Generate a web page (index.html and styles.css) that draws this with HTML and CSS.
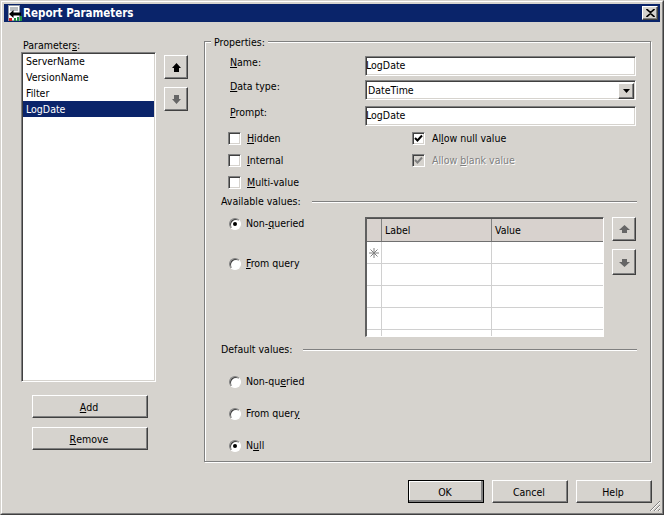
FILE: index.html
```html
<!DOCTYPE html>
<html lang="en">
<head>
<meta charset="utf-8">
<title>Report Parameters</title>
<link rel="stylesheet" href="styles.css">
</head>
<body>
<div class="window">
  <div class="frame">
    <header class="titlebar">
      <svg class="app-icon" width="14" height="17" viewBox="0 0 14 17">
        <rect x="0.5" y="0.5" width="11" height="15" fill="#fff" stroke="#9098a8"/>
        <path d="M2 3h8M2 5h8" stroke="#707880"/>
        <rect x="1" y="13" width="3" height="3" fill="#d02020"/>
        <rect x="6" y="13" width="2" height="3" fill="#209040"/>
        <rect x="9" y="12" width="2" height="4" fill="#209040"/>
        <rect x="12" y="11" width="2" height="5" fill="#209040"/>
        <path d="M1 9 5.500 5v2.500H13v3H5.500V13z" fill="#000"/>
      </svg>
      <span class="title">Report Parameters</span>
      <button class="close" type="button" aria-label="Close">
        <svg width="9" height="8" viewBox="0 0 9 8"><path d="M0.5 0 4.500 3.500 8.500 0M0.500 8 4.500 4.500 8.500 8" fill="none" stroke="#000" stroke-width="1.6"/></svg>
      </button>
    </header>

    <main class="main">
      <section class="params">
        <div class="params-label">Parameter<u>s</u>:</div>
        <ul class="list">
          <li class="item">ServerName</li>
          <li class="item">VersionName</li>
          <li class="item">Filter</li>
          <li class="item selected">LogDate</li>
        </ul>
        <div class="params-actions">
          <button class="btn wide" type="button"><u>A</u>dd</button>
          <button class="btn wide" type="button"><u>R</u>emove</button>
        </div>
      </section>

      <div class="arrows order-arrows">
        <button class="btn arrow" type="button" aria-label="Move up">
          <svg class="ico-black" width="9" height="9" viewBox="0 0 9 9"><path d="M4.500 0 9 5H7v4H2V5H0z"/></svg>
        </button>
        <button class="btn arrow" type="button" aria-label="Move down">
          <svg class="ico-gray" width="9" height="9" viewBox="0 0 9 9"><path d="M4.500 9 9 4H7V0H2v4H0z"/></svg>
        </button>
      </div>

      <section class="group">
        <span class="group-label">Properties:</span>

        <div class="prop-row">
          <label class="prop-label"><u>N</u>ame:</label>
          <div class="field">LogDate</div>
        </div>
        <div class="prop-row row-combo">
          <label class="prop-label"><u>D</u>ata type:</label>
          <div class="field combo">
            <span>DateTime</span>
            <span class="combo-btn"><svg width="7" height="4" viewBox="0 0 7 4"><path d="M0 0h7L3.500 4z"/></svg></span>
          </div>
        </div>
        <div class="prop-row row-prompt">
          <label class="prop-label"><u>P</u>rompt:</label>
          <div class="field">LogDate</div>
        </div>

        <div class="checks">
          <div class="check-col">
            <div class="check"><span class="box"></span><span><u>H</u>idden</span></div>
            <div class="check"><span class="box"></span><span><u>I</u>nternal</span></div>
            <div class="check"><span class="box"></span><span><u>M</u>ulti-value</span></div>
          </div>
          <div class="check-col check-col-right">
            <div class="check">
              <span class="box"><svg width="9" height="9" viewBox="0 0 9 9"><path d="M1 4 3.500 6.500 8 1.500" fill="none" stroke="#000" stroke-width="2"/></svg></span>
              <span>Al<u>l</u>ow null value</span>
            </div>
            <div class="check disabled">
              <span class="box"><svg width="9" height="9" viewBox="0 0 9 9"><path d="M1 4 3.500 6.500 8 1.500" fill="none" stroke="#808080" stroke-width="2"/></svg></span>
              <span>Allow <u>b</u>lank value</span>
            </div>
          </div>
        </div>

        <div class="heading heading-available"><span>Available values:</span><i class="rule"></i></div>
        <div class="available">
          <div class="radios-available">
            <div class="radio-row"><span class="radio on"></span><span>Non-<u>q</u>ueried</span></div>
            <div class="radio-row"><span class="radio"></span><span><u>F</u>rom query</span></div>
          </div>
          <div class="grid">
            <div class="grid-head">
              <div class="cell-rowhead"></div>
              <div class="cell-label">Label</div>
              <div class="cell-value">Value</div>
            </div>
            <div class="grid-row">
              <div class="cell-rowhead">
                <svg width="10" height="10" viewBox="0 0 10 10"><path d="M5 0v10M0 5h10M1.500 1.500l7 7M8.500 1.500l-7 7" stroke="#808080" fill="none"/></svg>
              </div>
              <div class="cell-label"></div><div class="cell-value"></div>
            </div>
            <div class="grid-row"><div class="cell-rowhead"></div><div class="cell-label"></div><div class="cell-value"></div></div>
            <div class="grid-row"><div class="cell-rowhead"></div><div class="cell-label"></div><div class="cell-value"></div></div>
            <div class="grid-row"><div class="cell-rowhead"></div><div class="cell-label"></div><div class="cell-value"></div></div>
            <div class="grid-row"><div class="cell-rowhead"></div><div class="cell-label"></div><div class="cell-value"></div></div>
          </div>
          <div class="arrows grid-arrows">
            <button class="btn arrow" type="button" aria-label="Move up">
              <svg class="ico-gray" width="11" height="9" viewBox="0 0 11 9"><path d="M5.500 0 11 5H8v3H3V5H0z"/></svg>
            </button>
            <button class="btn arrow tall" type="button" aria-label="Move down">
              <svg class="ico-gray" width="11" height="9" viewBox="0 0 11 9"><path d="M5.500 9 11 4H8V1H3v3H0z"/></svg>
            </button>
          </div>
        </div>

        <div class="heading heading-default"><span>Default values:</span><i class="rule"></i></div>
        <div class="radios-default">
          <div class="radio-row"><span class="radio"></span><span>Non-qu<u>e</u>ried</span></div>
          <div class="radio-row"><span class="radio"></span><span>From quer<u>y</u></span></div>
          <div class="radio-row"><span class="radio on"></span><span>N<u>u</u>ll</span></div>
        </div>
      </section>
    </main>

    <footer class="footer">
      <button class="btn dialog default" type="button">OK</button>
      <button class="btn dialog" type="button">Cancel</button>
      <button class="btn dialog" type="button">Help</button>
    </footer>

    <svg class="grip" width="12" height="12" viewBox="0 0 12 12">
      <path d="M11 1 1 11M11 5 5 11M11 9 9 11" stroke="#808080" fill="none"/>
      <path d="M11 2 2 11M11 6 6 11M11 10 10 11" stroke="#fff" fill="none"/>
    </svg>
  </div>
</div>
</body>
</html>
```

FILE: styles.css
```css
* { box-sizing: border-box; }

html, body { margin: 0; padding: 0; }

body {
  width: 664px;
  height: 515px;
  overflow: hidden;
  background: #d6d3ce;
  font-family: "DejaVu Sans", sans-serif;
  font-stretch: condensed;
  font-size: 10.5px;
  line-height: 13px;
  color: #000;
}

u { text-underline-offset: 1px; }

.window {
  width: 664px;
  height: 515px;
  border: 1px solid;
  border-color: #d6d3ce #404040 #404040 #d6d3ce;
}

.frame {
  position: relative;
  height: 100%;
  padding: 2px;
  border: 1px solid;
  border-color: #fff #808080 #808080 #fff;
  display: flex;
  flex-direction: column;
}

/* Title bar */
.titlebar {
  height: 18px;
  flex: none;
  background: #0a246a;
  color: #fff;
  display: flex;
  align-items: center;
  padding: 0 2px 0 4px;
}

.app-icon { flex: none; }

.title {
  margin-left: 1px;
  font-weight: bold;
  font-size: 11.5px;
  flex: 1;
}

.close {
  width: 16px;
  height: 14px;
  padding: 0;
  background: #d6d3ce;
  border: 1px solid;
  border-color: #fff #404040 #404040 #fff;
  box-shadow: inset -1px -1px #808080;
  display: flex;
  align-items: center;
  justify-content: center;
}

/* Main area */
.main {
  flex: none;
  display: flex;
  align-items: flex-start;
  padding: 17px 0 0 17px;
}

.params { width: 135px; flex: none; }

.params-label { height: 13px; padding-left: 2px; }

.list {
  list-style: none;
  margin: 0;
  padding: 0 1px;
  width: 135px;
  height: 330px;
  background: #fff;
  border: 1px solid;
  border-color: #808080 #fff #fff #808080;
  box-shadow: inset 1px 1px #404040, inset -1px -1px #d6d3ce;
}

.item {
  height: 16px;
  line-height: 16px;
  padding-left: 3px;
}

.item.selected { background: #0a246a; color: #fff; }

.params-actions {
  margin: 13px 0 0 11px;
  display: flex;
  flex-direction: column;
  gap: 9px;
}

/* Buttons */
.btn {
  margin: 0;
  padding: 1px 2px 0 0;
  font: inherit;
  color: #000;
  background: #d6d3ce;
  border: 1px solid;
  border-color: #fff #404040 #404040 #fff;
  box-shadow: inset -1px -1px #808080;
  display: flex;
  align-items: center;
  justify-content: center;
}

.wide { width: 116px; height: 23px; }

.arrows { display: flex; flex-direction: column; flex: none; }

.arrow { width: 24px; height: 24px; padding: 0; }

.arrow.tall { height: 26px; }

.order-arrows { margin: 16px 0 0 8px; gap: 8px; }

.grid-arrows { margin-left: 8px; gap: 8px; }

.ico-black { fill: #000; }

.ico-gray { fill: #666; }

/* Properties group */
.group {
  position: relative;
  flex: none;
  width: 447px;
  height: 421px;
  margin: 2px 0 0 16px;
  border: 1px solid #808080;
  box-shadow: 1px 1px #fff, inset 1px 1px #fff;
  padding-top: 14px;
}

.group-label {
  position: absolute;
  left: 6px;
  top: -6px;
  padding: 0 3px;
  background: #d6d3ce;
}

.prop-row {
  display: flex;
  align-items: flex-start;
  height: 19px;
  padding-left: 25px;
}

.row-combo { margin-top: 5px; }

.row-prompt { margin-top: 7px; }

.prop-label { width: 135px; flex: none; }

.field {
  width: 271px;
  height: 20px;
  line-height: 17px;
  padding-left: 0;
  background: #fff;
  border: 1px solid;
  border-color: #808080 #fff #fff #808080;
  box-shadow: inset 1px 1px #404040, inset -1px -1px #d6d3ce;
}

.combo {
  display: flex;
  align-items: center;
  justify-content: space-between;
  padding: 0 1px 0 2px;
}

.combo-btn {
  width: 16px;
  height: 16px;
  margin-top: 1px;
  background: #d6d3ce;
  border: 1px solid;
  border-color: #fff #404040 #404040 #fff;
  box-shadow: inset -1px -1px #808080;
  display: flex;
  align-items: center;
  justify-content: center;
}

/* Check boxes */
.checks {
  display: flex;
  margin: 7px 0 0 23px;
}

.check-col {
  width: 184px;
  flex: none;
  display: flex;
  flex-direction: column;
  gap: 9px;
}

.check {
  display: flex;
  align-items: center;
  gap: 6px;
  height: 13px;
}

.check-col-right .check { gap: 7px; }

.box {
  width: 13px;
  height: 13px;
  flex: none;
  background: #fff;
  border: 1px solid;
  border-color: #808080 #fff #fff #808080;
  box-shadow: inset 1px 1px #404040, inset -1px -1px #d6d3ce;
  display: flex;
  align-items: center;
  justify-content: center;
}

.check.disabled { color: #808080; text-shadow: 1px 1px #fff; }

.check.disabled .box { background: #d6d3ce; }

/* Section headings */
.heading {
  display: flex;
  align-items: center;
  height: 13px;
  margin: 0 13px 0 16px;
  gap: 11px;
}

.heading-available { margin-top: 6px; }

.heading-default { margin-top: 6px; }

.rule {
  flex: 1;
  height: 2px;
  border-top: 1px solid #808080;
  border-bottom: 1px solid #fff;
}

/* Available values */
.available {
  display: flex;
  align-items: flex-start;
  margin: 9px 0 0 24px;
  height: 120px;
}

.radios-available {
  width: 136px;
  flex: none;
  display: flex;
  flex-direction: column;
  gap: 27px;
}

.radio-row {
  display: flex;
  align-items: center;
  gap: 5px;
  height: 13px;
}

.radio {
  position: relative;
  width: 12px;
  height: 12px;
  flex: none;
  border-radius: 50%;
  background: #fff;
  border: 1px solid;
  border-color: #808080 #fff #fff #808080;
  box-shadow: inset 1px 1px #404040;
}

.radio.on::after {
  content: "";
  position: absolute;
  left: 3px;
  top: 3px;
  width: 4px;
  height: 4px;
  border-radius: 50%;
  background: #000;
}

/* Grid */
.grid {
  width: 239px;
  height: 120px;
  flex: none;
  overflow: hidden;
  background: #fff;
  border: 1px solid;
  border-width: 1px 1px 1px 2px;
  border-color: #606060 #fff #fff #606060;
}

.grid-head {
  display: flex;
  height: 24px;
  background: #d8d2ce;
  border-bottom: 1px solid #707070;
  border-top: 1px solid #505050;
  line-height: 22px;
}

.grid-head .cell-rowhead,
.grid-head .cell-label { border-right-color: #808080; }

.grid-row {
  display: flex;
  height: 22px;
  border-bottom: 1px solid #d0d0d0;
}

.cell-rowhead {
  width: 15px;
  flex: none;
  border-right: 1px solid #d0d0d0;
  display: flex;
  align-items: center;
  justify-content: center;
}

.cell-label {
  width: 110px;
  flex: none;
  padding-left: 3px;
  border-right: 1px solid #d0d0d0;
}

.cell-value { flex: 1; padding-left: 3px; }

/* Default values */
.radios-default {
  display: flex;
  flex-direction: column;
  gap: 19px;
  margin: 19px 0 0 24px;
}

/* Footer */
.footer {
  flex: none;
  display: flex;
  justify-content: flex-end;
  gap: 8px;
  margin-top: 18px;
  padding-right: 8px;
}

.dialog { width: 76px; height: 23px; }

.dialog.default {
  outline: 1px solid #000;
  outline-offset: -1px;
  box-shadow: inset -2px -2px #808080, inset 1px 1px #fff;
}

.grip {
  position: absolute;
  right: 1px;
  bottom: 1px;
}
```
